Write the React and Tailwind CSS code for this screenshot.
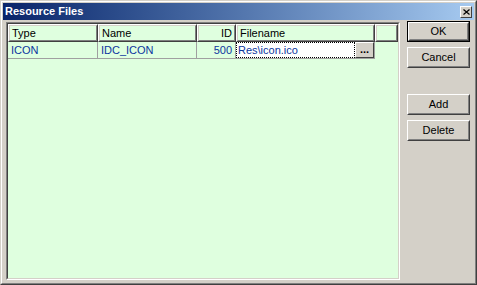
import React from 'react'

const font = { fontFamily: '"Liberation Sans", Arial, sans-serif' }

function Button({ label, isDefault, className = '' }) {
  // classic win32 raised push button
  if (isDefault) {
    return (
      <div className={`border border-black ${className}`}>
        <div className="h-full w-full border border-t-white border-l-white border-r-[#404040] border-b-[#404040]">
          <div className="flex h-full w-full items-center justify-center border border-t-[#D4D0C8] border-l-[#D4D0C8] border-r-[#808080] border-b-[#808080] text-[11px] text-black">
            {label}
          </div>
        </div>
      </div>
    )
  }
  return (
    <div className={`border border-t-white border-l-white border-r-[#404040] border-b-[#404040] ${className}`}>
      <div className="flex h-full w-full items-center justify-center border border-t-[#D4D0C8] border-l-[#D4D0C8] border-r-[#808080] border-b-[#808080] bg-[#D4D0C8] text-[11px] text-black">
        {label}
      </div>
    </div>
  )
}

function HeaderCell({ children, className = '', align = 'left' }) {
  return (
    <div className={`h-full border border-t-white border-l-white border-r-[#404040] border-b-[#404040] ${className}`}>
      <div
        className={`flex h-full items-center border border-t-[#D4D0C8] border-l-[#D4D0C8] border-r-[#808080] border-b-[#808080] px-[2px] text-[11px] text-black ${
          align === 'right' ? 'justify-end' : ''
        }`}
      >
        {children}
      </div>
    </div>
  )
}

function DataCell({ children, className = '', align = 'left' }) {
  return (
    <div
      className={`flex h-full items-center border-r border-b border-[#A0A0A0] px-[3px] text-[11px] text-[#0C36A0] ${
        align === 'right' ? 'justify-end' : ''
      } ${className}`}
    >
      {children}
    </div>
  )
}

export default function App() {
  return (
    <div style={font} className="h-[285px] w-[477px] select-none border border-t-[#D4D0C8] border-l-[#D4D0C8] border-r-[#404040] border-b-[#404040] bg-[#D4D0C8]">
      <div className="flex h-full w-full flex-col border border-t-white border-l-white border-r-[#808080] border-b-[#808080] p-[1px]">
        {/* Title bar */}
        <div className="flex h-[17px] shrink-0 items-center justify-between bg-gradient-to-r from-[#0A246A] to-[#A6CAF0] pl-[2px] pr-[2px]">
          <span className="text-[11px] font-bold leading-none text-white">Resource Files</span>
          <div className="flex h-[12px] w-[12px] items-center justify-center border border-t-white border-l-white border-r-[#404040] border-b-[#404040] bg-[#D4D0C8]">
            <svg width="7" height="6" viewBox="0 0 7 6">
              <path d="M0.5 0.5 L6.5 5.5 M6.5 0.5 L0.5 5.5" stroke="black" strokeWidth="1.2" />
            </svg>
          </div>
        </div>

        {/* Body */}
        <div className="flex flex-1 items-start pl-[3px]">
          {/* Grid */}
          <div className="mt-[2px] h-[258px] w-[394px] border border-t-[#808080] border-l-[#808080] border-r-white border-b-white">
            <div className="flex h-full w-full flex-col border border-t-[#404040] border-l-[#404040] border-r-[#D4D0C8] border-b-[#D4D0C8] bg-[#DFFFDF]">
              <div className="flex h-[18px] shrink-0">
                <HeaderCell className="w-[90px]">Type</HeaderCell>
                <HeaderCell className="w-[99px]">Name</HeaderCell>
                <HeaderCell className="w-[39px]" align="right">ID</HeaderCell>
                <HeaderCell className="w-[139px]">Filename</HeaderCell>
                <HeaderCell className="flex-1"> </HeaderCell>
              </div>
              <div className="flex h-[17px] shrink-0">
                <DataCell className="w-[90px]">ICON</DataCell>
                <DataCell className="w-[99px]">IDC_ICON</DataCell>
                <DataCell className="w-[39px]" align="right">500</DataCell>
                <div className="flex h-full w-[139px] border-r border-b border-[#A0A0A0]">
                  <div className="flex flex-1 items-center border border-dotted border-black bg-white px-[1px] text-[11px] text-[#0C36A0]">
                    Res\icon.ico
                  </div>
                  <div className="h-full w-[19px] border border-t-white border-l-white border-r-[#404040] border-b-[#404040] bg-[#D4D0C8]">
                    <div className="flex h-full items-end justify-center pb-[2px] text-[11px] font-bold leading-none text-black">...</div>
                  </div>
                </div>
              </div>
            </div>
          </div>

          {/* Buttons */}
          <div className="ml-[7px] mt-[1px] flex w-[63px] flex-col">
            <Button label="OK" isDefault className="h-[21px]" />
            <Button label="Cancel" className="mt-[5px] h-[21px]" />
            <Button label="Add" className="mt-[26px] h-[21px]" />
            <Button label="Delete" className="mt-[5px] h-[21px]" />
          </div>
        </div>
      </div>
    </div>
  )
}
